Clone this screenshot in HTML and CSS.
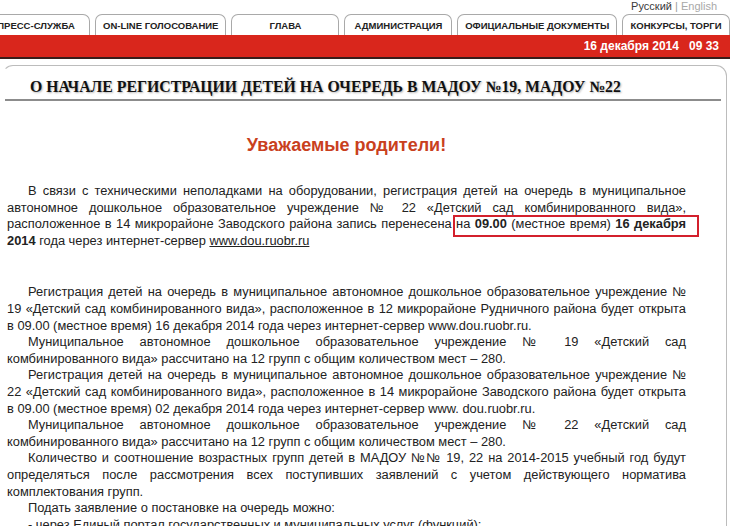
FILE: index.html
```html
<!DOCTYPE html>
<html lang="ru">
<head>
<meta charset="utf-8">
<title>О начале регистрации детей на очередь</title>
<link rel="stylesheet" href="styles.css">
</head>
<body>
<div class="page">
  <div class="lang"><a class="lang-cur" href="#">Русский</a> <span class="lang-sep">|</span> <a class="lang-alt" href="#">English</a></div>
  <nav class="tabs">
    <a class="tab" href="#">ПРЕСС-СЛУЖБА</a>
    <a class="tab" href="#">ON-LINE ГОЛОСОВАНИЕ</a>
    <a class="tab" href="#">ГЛАВА</a>
    <a class="tab" href="#">АДМИНИСТРАЦИЯ</a>
    <a class="tab" href="#">ОФИЦИАЛЬНЫЕ ДОКУМЕНТЫ</a>
    <a class="tab" href="#">КОНКУРСЫ, ТОРГИ</a>
  </nav>
  <div class="redbar"><span class="date">16 декабря 2014</span><span class="time">09 33</span></div>
  <div class="card">
    <h1 class="title">О НАЧАЛЕ РЕГИСТРАЦИИ ДЕТЕЙ НА ОЧЕРЕДЬ В МАДОУ №19, МАДОУ №22</h1>
    <div class="content">
      <h2 class="greeting">Уважаемые родители!</h2>
      <p class="lead">
        <span class="ln">В связи с техническими неполадками на оборудовании, регистрация детей на очередь в муниципальное</span>
        <span class="ln">автономное дошкольное образовательное учреждение № 22 «Детский сад комбинированного вида»,</span>
        <span class="ln">расположенное в 14 микрорайоне Заводского района запись перенесена <span class="marked">на <b>09.00</b> (местное время) <b>16 декабря</b></span></span>
        <span class="ln"><b>2014</b> года через интернет-сервер <a class="link" href="#">www.dou.ruobr.ru</a></span>
      </p>
      <div class="section">
        <p>
          <span class="ln">Регистрация детей на очередь в муниципальное автономное дошкольное образовательное учреждение №</span>
          <span class="ln">19 «Детский сад комбинированного вида», расположенное в 12 микрорайоне Рудничного района будет открыта</span>
          <span class="ln">в 09.00 (местное время) 16 декабря 2014 года через интернет-сервер www.dou.ruobr.ru.</span>
        </p>
        <p>
          <span class="ln">Муниципальное автономное дошкольное образовательное учреждение № 19 «Детский сад</span>
          <span class="ln">комбинированного вида» рассчитано на 12 групп с общим количеством мест – 280.</span>
        </p>
        <p>
          <span class="ln">Регистрация детей на очередь в муниципальное автономное дошкольное образовательное учреждение №</span>
          <span class="ln">22 «Детский сад комбинированного вида», расположенное в 14 микрорайоне Заводского района будет открыта</span>
          <span class="ln">в 09.00 (местное время) 02 декабря 2014 года через интернет-сервер www. dou.ruobr.ru.</span>
        </p>
        <p>
          <span class="ln">Муниципальное автономное дошкольное образовательное учреждение № 22 «Детский сад</span>
          <span class="ln">комбинированного вида» рассчитано на 12 групп с общим количеством мест – 280.</span>
        </p>
        <p>
          <span class="ln">Количество и соотношение возрастных групп детей в МАДОУ №№ 19, 22 на 2014-2015 учебный год будут</span>
          <span class="ln">определяться после рассмотрения всех поступивших заявлений с учетом действующего норматива</span>
          <span class="ln">комплектования групп.</span>
        </p>
        <p>
          <span class="ln">Подать заявление о постановке на очередь можно:</span>
        </p>
        <p>
          <span class="ln">- через Единый портал государственных и муниципальных услуг (функций);</span>
        </p>
      </div>
    </div>
  </div>
</div>
</body>
</html>
```
FILE: styles.css
```css
html, body {
  margin: 0;
  padding: 0;
  background: #fff;
}
body {
  overflow: hidden;
  font-family: "Liberation Sans", Arial, sans-serif;
  color: #222;
}
.page {
  width: 730px;
}
.lang {
  height: 14px;
  line-height: 12px;
  font-size: 11px;
  text-align: right;
  padding-right: 13px;
  box-sizing: border-box;
}
.lang a {
  text-decoration: none;
}
.lang-cur {
  color: #3a3a3a;
}
.lang-sep {
  color: #9a9a9a;
}
.lang-alt {
  color: #a8a8a8;
}
.tabs {
  display: flex;
  gap: 5px;
  height: 21px;
  margin-left: -18px;
}
.tab {
  display: flex;
  align-items: center;
  justify-content: center;
  min-width: 108px;
  padding: 1px 8px 0;
  box-sizing: border-box;
  border: 1px solid #a9a9a9;
  border-bottom: none;
  border-radius: 7px 7px 0 0;
  background: #fff;
  color: #222;
  font-size: 9.5px;
  font-weight: bold;
  text-decoration: none;
  white-space: nowrap;
}
.redbar {
  height: 22px;
  background: #d9261c;
  border-bottom: 2px solid #3a1c19;
  display: flex;
  justify-content: flex-end;
  align-items: center;
  padding-right: 11px;
  color: #fff;
  font-size: 12px;
  font-weight: bold;
}
.time {
  margin-left: 10px;
}
.card {
  margin: 6px 0 0 2px;
  width: 725px;
  height: 600px;
  box-sizing: border-box;
  border: 1px solid #bcbcbc;
  border-left-color: transparent;
  border-bottom: none;
  border-radius: 11px 11px 0 0;
}
.title {
  margin: 0 5px 0 2px;
  padding: 9px 0 0 25px;
  font-family: "Liberation Serif", "Times New Roman", serif;
  font-size: 15.8px;
  line-height: 24px;
  font-weight: bold;
  color: #111;
  text-shadow: 1px 1px 2px rgba(0, 0, 0, 0.3);
  border-bottom: 2px solid #8c8c8c;
}
.content {
  padding: 0 40px 0 4px;
  font-size: 12.85px;
  line-height: 16.6px;
}
.greeting {
  margin: 33px 0 0;
  font-size: 18px;
  line-height: 22px;
  text-align: center;
  color: #c9401d;
  font-weight: bold;
}
.content p {
  margin: 0;
}
.ln {
  display: block;
  white-space: nowrap;
  text-align: justify;
  text-align-last: justify;
}
.ln:first-child {
  text-indent: 21px;
}
.ln:last-child {
  text-align-last: left;
}
.lead {
  margin-top: 27px !important;
}
.section {
  margin-top: 35px;
}
.marked {
  position: relative;
}
.marked::after {
  content: "";
  position: absolute;
  left: -3px;
  right: -13px;
  top: -1px;
  bottom: -6px;
  border: 2px solid #d3202c;
}
.link {
  color: #222;
  text-decoration: underline;
}
```
